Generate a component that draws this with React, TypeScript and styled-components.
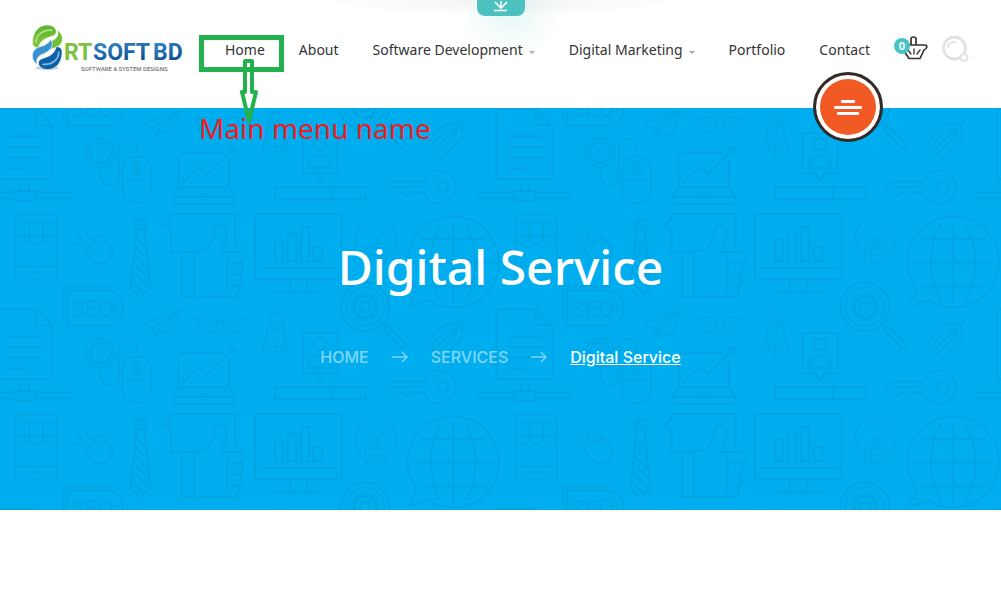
import React from "react";
import styled, { createGlobalStyle } from "styled-components";

const GlobalStyle = createGlobalStyle`
  *, *::before, *::after { box-sizing: border-box; }
  body { margin: 0; background: #fff; font-family: "Noto Sans", sans-serif; color: #333; }
  a { color: inherit; text-decoration: none; }
  button { border: 0; padding: 0; background: none; font: inherit; cursor: pointer; }
`;

const Header = styled.header`
  position: relative;
  z-index: 1;
  display: flex;
  align-items: center;
  min-height: 108px;
  padding: 0 32px 8px;
  background: radial-gradient(180px 16px at 50% 0, #f3f3f3, #fff) no-repeat #fff;
`;

const LogoLink = styled.a`
  display: block;
  flex: none;
  height: 52px;
`;

const Nav = styled.nav`
  flex: 1;
  min-width: 0;
`;

const NavList = styled.ul`
  display: flex;
  justify-content: flex-end;
  gap: 34px;
  margin: 0;
  padding: 0 24px 0 0;
  list-style: none;
`;

const NavItem = styled.li`
  position: relative;
  display: flex;
  align-items: center;
  gap: 6px;
  font-size: 14px;
  line-height: 20px;
  white-space: nowrap;
`;

const Caret = styled.span`
  margin-top: 4px;
  border: 3px solid transparent;
  border-top-color: #aaa;
  border-bottom: 0;
`;

const Callout = styled.svg`
  position: absolute;
  top: -5px;
  left: -26px;
  pointer-events: none;
`;

const CalloutText = styled.span`
  position: absolute;
  top: 70px;
  left: -26px;
  font-size: 28px;
  line-height: 36px;
  color: #ed1c24;
`;

const Actions = styled.div`
  display: flex;
  flex: none;
  align-items: center;
  gap: 14px;
`;

const IconButton = styled.button`
  position: relative;
  display: block;
  height: 28px;
`;

const Badge = styled.span`
  position: absolute;
  top: 2px;
  left: 0;
  width: 16px;
  border-radius: 8px;
  background: #4ac4c3;
  color: #fff;
  font-size: 11px;
  font-weight: 600;
  line-height: 16px;
  text-align: center;
`;

const DownloadTab = styled.button`
  position: absolute;
  top: 0;
  left: 50%;
  width: 48px;
  height: 16px;
  margin-left: -24px;
  border-radius: 0 0 8px 8px;
  background: #4cc1c0;
  box-shadow: 10px 5px 35px rgba(76, 193, 192, 0.4);
`;

const MenuButton = styled.button`
  position: absolute;
  top: 72px;
  right: 118px;
  display: flex;
  flex-direction: column;
  align-items: center;
  justify-content: center;
  gap: 3px;
  width: 70px;
  height: 70px;
  border: 3px solid #2c2c2c;
  border-radius: 50%;
  background: #f15a24;
  box-shadow: inset 0 0 0 4px #fff;
`;

const MenuLine = styled.span<{ $width: number }>`
  width: ${(p) => p.$width}px;
  height: 3px;
  border-radius: 1px;
  background: #fff;
`;

const Hero = styled.section`
  display: grid;
  min-height: 402px;
  background: #00aeef;
`;

const Backdrop = styled.svg`
  grid-area: 1 / 1;
  width: 100%;
  height: 100%;
`;

const HeroContent = styled.div`
  grid-area: 1 / 1;
  display: flex;
  flex-direction: column;
  align-items: center;
  padding: 127px 32px 0;
  color: #fff;
  z-index: 0;
`;

const Title = styled.h1`
  margin: 0;
  font-size: 48px;
  font-weight: 500;
  line-height: 64px;
`;

const Crumbs = styled.ol`
  display: flex;
  align-items: center;
  gap: 23px;
  margin: 48px 0 0;
  padding: 0;
  list-style: none;
  font-family: Inter, sans-serif;
  font-size: 16px;
  font-weight: 500;
  line-height: 20px;
`;

const Crumb = styled.li<{ $current?: boolean }>`
  display: flex;
  align-items: center;
  gap: 23px;
  color: ${(p) => (p.$current ? "#fff" : "#80d6f7")};
  text-decoration: ${(p) => (p.$current ? "underline" : "none")};
`;

/* One half of the emblem; the other half is the same shape turned round. */
function Swirl({ main, tail, shine }: { main: string; tail: string; shine: string }) {
  return (
    <g stroke="#fff" strokeWidth="2">
      <path d="M5 70C2 36 22 12 48 12C64 12 75 20 76 32C76 48 52 45 36 58C27 66 25 72 22 82C12 80 6 76 5 70z" fill={main} />
      <path d="M78 26C102 42 100 74 68 82C52 86 44 92 38 104C27 82 42 66 60 60C78 53 85 42 78 26z" fill={tail} />
      <path d="M15 66C13 42 36 25 64 28" fill="none" stroke={shine} strokeWidth="5" />
    </g>
  );
}

function Logo() {
  return (
    <svg width="152" height="52" viewBox="0 0 152 52" role="img" aria-label="RT Soft BD">
      <defs>
        <linearGradient id="blue" x1="0" y1="0" x2="0.4" y2="1">
          <stop offset="0" stopColor="#3a93d2" />
          <stop offset="1" stopColor="#0a4a8c" />
        </linearGradient>
        <linearGradient id="green" x1="0" y1="0" x2="0" y2="1">
          <stop offset="0" stopColor="#58b52c" />
          <stop offset="1" stopColor="#8cc63f" />
        </linearGradient>
      </defs>
      <ellipse cx="15" cy="44" rx="12" ry="2" fill="#bbb" opacity="0.7" />
      <g transform="translate(-1 -3) scale(.3333)">
        <Swirl main="url(#green)" tail="#6fbf35" shine="#b4dc8c" />
        <g transform="rotate(180 49 79)">
          <Swirl main="#0f5fa6" tail="#3793cf" shine="#7dbbe6" />
        </g>
      </g>
      <g fontFamily="Roboto, sans-serif" fontSize="23" fontWeight="700">
        <text x="32" y="36" fill="#7cc142">RT</text>
        <text x="61" y="36" fill="url(#blue)">SOFT</text>
        <text x="121" y="36" fill="url(#blue)">BD</text>
      </g>
      <text x="49" y="47" fontFamily="Roboto, sans-serif" fontSize="6" fill="#555">
        SOFTWARE &amp; SYSTEM DESIGNS
      </text>
    </svg>
  );
}

function BasketIcon() {
  return (
    <svg width="34" height="28" viewBox="0 0 34 28" fill="none" stroke="#333" strokeWidth="1.7" strokeLinecap="round" strokeLinejoin="round">
      <path d="M17 9V3Q17 1 19.500 1Q22 1 22 3V9M9 9H31C34 9 33 13 30 14L26 22.500H15L10 15" />
      <path d="M14 14l3 4M20 13v5M26 14l-3 4" strokeWidth="1.3" />
    </svg>
  );
}

function SearchIcon() {
  return (
    <svg width="27" height="28" viewBox="0 0 27 28" fill="none" stroke="#e2e2e2" strokeWidth="2.8" strokeLinecap="round">
      <circle cx="12.500" cy="12" r="11" />
      <path d="M6 11c0-3 3-5 7-5" strokeWidth="2" />
      <circle cx="22" cy="21.500" r="3.5" fill="#fff" strokeWidth="2.2" />
    </svg>
  );
}

function ArrowIcon() {
  return (
    <svg width="16" height="12" viewBox="0 0 16 12" fill="none" stroke="#80d6f7" strokeWidth="1.4">
      <path d="M0 6h15M10 1l5 5-5 5" />
    </svg>
  );
}

const teeth = Array.from({ length: 10 }, (_, i) => i * 36);
const ticks = [-120, -90, -60, -30, 0, 30, 60, 90, 120];

/* Line drawings of one 500 x 200 wallpaper tile. */
function Motifs() {
  return (
    <g id="motifs" fill="none" stroke="#00a4e3" strokeWidth="6" strokeLinecap="round" strokeLinejoin="round">
      <g transform="translate(0 182) scale(.3333)">
        <path d="M-10 58H108L157 106V268H-10V58M108 58v48h49M25 139H125M25 171H125M25 203H125M25 235H78" />
        <path d="M-67 307H42M-67 325H42M108 307H212M108 325H212M42 303H106V331H42zM61 303V284M87 303V284" />
        <path d="M191 97V-11H328M202 1H338L368 30V77L338 107H202z" />
        <circle cx="346" cy="55" r="8" strokeWidth="5" />
        <text x="213" y="82" fontFamily="Roboto, sans-serif" fontSize="70" fontWeight="400" fill="#00a4e3" stroke="none">SEO</text>
        <path d="M434 99L545 60L514 136L484 124L466 146L458 113zM458 113L545 60L472 119L466 146M472 119L484 124" strokeWidth="4" />
        <path d="M583 87H598M592 86Q620 80 650 86Q652 126 642 127H606Q596 127 592 86M670 86Q700 80 728 86Q728 126 718 127H682Q672 127 670 86M651 94Q660 88 670 94M728 86H736V94M606 114L626 98M618 117L632 104M690 114L706 98M698 117L712 104" strokeWidth="4" />
        <g strokeWidth="5">
          <circle cx="301" cy="188" r="43" />
          <circle cx="301" cy="188" r="31" />
          <path d="M301 231V258C301 296 356 296 356 258V174C356 137 411 137 411 174V187" />
          <rect x="367" y="199" width="86" height="140" rx="40" />
          <path d="M382 269H440M410 213V269" />
          <rect x="401" y="220" width="18" height="34" rx="9" />
        </g>
        <text x="290" y="201" fontFamily="Roboto, sans-serif" fontSize="37" fill="#00a4e3" stroke="none">$</text>
        <path d="M535 291V203Q535 190 548 190H670M687 210V291H535L518 321H705L687 291M518 321V334Q518 342 527 342H696Q705 342 705 334V321M547 280L598 230L622 253L704 174M684 174H704V191M602 311H621" />
        <path d="M46 457V385Q46 374 57 374H160Q171 374 171 385V457M46 396H171M46 437H171M88 406V437M129 406V437M46 437C46 470 88 470 88 440C88 470 129 470 129 440C129 470 171 470 171 437M46 468V570H171V468M46 529H171M97 548H120" strokeWidth="5" />
        <path d="M221 461C234 472 250 462 244 446C227 432 230 416 246 417C262 417 262 445 273 443" strokeWidth="5" />
        <rect x="262" y="434" width="68" height="90" rx="33" transform="rotate(-38 296 479)" strokeWidth="5" />
        <path d="M267 473L311 439M276 446L289 462" strokeWidth="5" />
        <path d="M406 390H438V418H406zM410 418L391 595L421 622L452 595L434 418M409 392L436 418M408 442L436 471M406 471L440 505M402 496L444 538M400 518L446 562M397 545L448 594M394 574L430 611" />
        <path d="M533 485H514V412L491 404L514 391V372H706V466M546 486H582V621H546zM582 486C660 478 633 407 660 404Q680 402 680 431Q680 454 661 486H720C742 486 742 518 716 519H697M716 519C734 524 734 552 710 553H697M710 553C729 558 729 585 708 587H697M708 587C726 595 715 621 700 621H596M682 503V604" />
      </g>
      <g transform="translate(250 182) scale(.3333)">
        <circle cx="345" cy="50" r="73" />
        <circle cx="345" cy="50" r="58" strokeWidth="4" />
        <circle cx="345" cy="50" r="15" />
        <circle cx="345" cy="50" r="32" />
        {teeth.map((a) => (
          <path key={a} d="M339 19V10H351V19" strokeWidth="5" transform={`rotate(${a} 345 50)`} />
        ))}
        <path d="M394 98L409 113M409 105L470 164L458 177L401 119z" />
        <path d="M50 170C50 125 50 78 76 60C102 78 102 125 102 170M50 170H102M52 132Q39 151 39 193Q48 181 61 177M100 132Q115 151 115 193Q106 181 92 177M76 150V200M61 72H91" strokeWidth="4" />
        <circle cx="76" cy="104" r="14" strokeWidth="4" />
        <path d="M158 129H263V250H224L211 275L198 250H158zM175 234C175 183 244 183 244 234z" />
        <circle cx="210" cy="163" r="18" />
        <path d="M530 162L573 112L593 101L610 105L627 101L636 117V145L575 205zM610 125L648 89M548 163L581 130M557 174L599 132M568 184L609 143" strokeWidth="5" />
        <circle cx="610" cy="125" r="8" strokeWidth="5" />
        <path d="M75 291H347V328H75zM248 291V328M271 310H273M297 310H299M321 310H323" />
        <path d="M407 290L425 275H521A50 50 0 1 1 521 307H486L470 319L458 308L439 320zM425 291H519" strokeWidth="5" />
        <circle cx="579" cy="291" r="16" />
        <path d="M22 372H269Q275 372 275 379V561Q275 568 268 568H22Q15 568 15 561V379Q15 372 22 372M34 534H258M120 568V607M171 568V607M75 607H218M75 450H100V514H75zM113 431H139V514H113zM152 411H178V514H152zM191 470H217V514H191z" />
        <path d="M337 493A62 62 0 1 1 416 494M383 449L413 419" strokeWidth="4" />
        <circle cx="377" cy="456" r="9" strokeWidth="4" />
        {ticks.map((a) => (
          <path key={a} d="M377 396V404" strokeWidth="4" transform={`rotate(${a} 377 456)`} />
        ))}
        <path d="M345 474H409V518H345zM366 486L355 496L366 507M388 486L399 496L388 507M368 496H386" strokeWidth="4" />
        <path d="M499 597A137 137 0 1 1 535 631L480 648zM610 399V635M515 446H704M490 517H729M515 589H704M572 404C532 472 534 561 572 631M647 404C687 472 687 561 647 631" />
      </g>
    </g>
  );
}

function Wallpaper() {
  return (
    <Backdrop aria-hidden="true">
      <defs>
        <Motifs />
        <pattern id="tile" width="500" height="200" patternUnits="userSpaceOnUse">
          <use href="#motifs" />
          <use href="#motifs" x="500" />
          <use href="#motifs" y="-200" />
          <use href="#motifs" x="500" y="-200" />
        </pattern>
      </defs>
      <rect width="100%" height="100%" fill="url(#tile)" />
    </Backdrop>
  );
}

export default function App() {
  return (
    <>
      <GlobalStyle />
      <Header>
        <LogoLink href="#home">
          <Logo />
        </LogoLink>
        <Nav aria-label="Main">
          <NavList>
            <NavItem>
              <a href="#home">Home</a>
              <Callout width="88" height="92" viewBox="0 0 88 92" fill="none" stroke="#22b14c" aria-hidden="true">
                <rect x="2.5" y="2.5" width="80" height="32" strokeWidth="5" />
                <path d="M46 26h7v31h4l-7 29-7-29h3z" strokeWidth="4" strokeLinejoin="round" />
              </Callout>
              <CalloutText>Main menu name</CalloutText>
            </NavItem>
            <NavItem><a href="#about">About</a></NavItem>
            <NavItem><a href="#software">Software Development</a><Caret /></NavItem>
            <NavItem><a href="#marketing">Digital Marketing</a><Caret /></NavItem>
            <NavItem><a href="#portfolio">Portfolio</a></NavItem>
            <NavItem><a href="#contact">Contact</a></NavItem>
          </NavList>
        </Nav>
        <Actions>
          <IconButton aria-label="Cart">
            <BasketIcon />
            <Badge>0</Badge>
          </IconButton>
          <IconButton aria-label="Search">
            <SearchIcon />
          </IconButton>
        </Actions>
        <DownloadTab aria-label="Download">
          <svg width="48" height="16" viewBox="0 0 48 16" fill="none" stroke="#fff" strokeWidth="1.6">
            <path d="M24 0v7M18 1l6 6 6-6M17 9.5h13" />
          </svg>
        </DownloadTab>
        <MenuButton aria-label="Open menu">
          <MenuLine $width={14} />
          <MenuLine $width={28} />
          <MenuLine $width={22} />
        </MenuButton>
      </Header>
      <main>
        <Hero>
          <Wallpaper />
          <HeroContent>
            <Title>Digital Service</Title>
            <Crumbs>
              <Crumb><a href="#home">HOME</a><ArrowIcon /></Crumb>
              <Crumb><a href="#services">SERVICES</a><ArrowIcon /></Crumb>
              <Crumb $current aria-current="page">Digital Service</Crumb>
            </Crumbs>
          </HeroContent>
        </Hero>
      </main>
    </>
  );
}
